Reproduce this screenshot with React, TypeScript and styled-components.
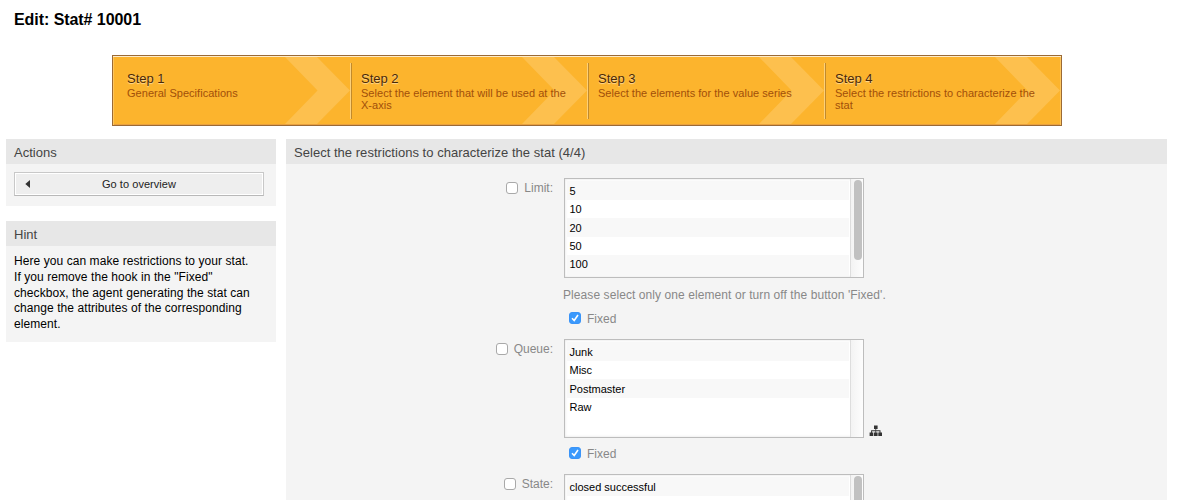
import React from "react";
import styled, { createGlobalStyle } from "styled-components";

const GlobalStyle = createGlobalStyle`
  body {
    margin: 0;
    background: #fff;
    color: #000;
    font-family: Helvetica, "Liberation Sans", Arial, sans-serif;
    font-size: 12px;
    overflow: hidden;
  }
  * { box-sizing: border-box; }
`;

const Page = styled.div`
  width: 1183px;
  height: 500px;
  overflow: hidden;
`;

const Title = styled.h1`
  margin: 0;
  padding: 10px 14px 0;
  height: 55px;
  font-size: 16px;
  line-height: 19px;
  font-weight: bold;
  letter-spacing: -0.06px;
`;

const StepBar = styled.ol`
  display: flex;
  list-style: none;
  margin: 0 0 13px 112px;
  padding: 0;
  width: 950px;
  height: 71px;
  background: #fcb42d;
  border: 1px solid #9b6a35;
  box-shadow: inset 0 1px #fdeccb, inset 1px 0 #fdc65f, inset -1px 0 #fdc65f, inset 0 -1px #e9a040;
`;

const StepItem = styled.li`
  position: relative;
  flex: none;
  width: 237px;
  padding: 15px 0 0 10px;

  &::before {
    content: "";
    position: absolute;
    left: -1px;
    top: 7px;
    width: 2px;
    height: 56px;
    background: linear-gradient(90deg, #fdd079 50%, #c18a2c 50%);
  }
  &:first-child {
    width: 238px;
    padding-left: 14px;
  }
  &:first-child::before { display: none; }
  &:last-child { width: 236px; }
`;

const Chevron = styled.svg`
  position: absolute;
  right: 1px;
  top: 1px;
  fill: #fdc04e;
`;

const StepName = styled.div`
  position: relative;
  font-size: 13px;
  line-height: 16px;
  color: #4a2805;
  text-shadow: 0 1px 1px rgba(255, 255, 255, 0.55);
`;

const StepText = styled.div`
  position: relative;
  width: 215px;
  font-size: 11px;
  line-height: 12px;
  color: #a14f0a;
  letter-spacing: 0.03px;
`;

const Columns = styled.div`
  display: flex;
  gap: 10px;
  padding: 0 16px 0 6px;
`;

const Sidebar = styled.aside`
  display: flex;
  flex-direction: column;
  gap: 15px;
  width: 270px;
`;

const Panel = styled.section`
  background: #f4f4f4;
`;

const MainPanel = styled(Panel)`
  flex: 1;
  height: 361px;
`;

const PanelTitle = styled.h2`
  margin: 0;
  height: 25px;
  padding-left: 8px;
  background: #e7e7e7;
  color: #444;
  font-size: 13px;
  font-weight: normal;
  line-height: 27px;
  letter-spacing: 0.03px;
`;

const PanelBody = styled.div`
  padding: 8px 12px 10px 8px;
`;

const OverviewButton = styled.button`
  display: flex;
  align-items: center;
  width: 250px;
  height: 24px;
  padding: 0 10px;
  border: 1px solid #c8c8c8;
  border-bottom-color: #b8b8b8;
  box-shadow: inset 0 0 0 1px #fff;
  background: #eee;
  color: #222;
  font-family: inherit;
  font-size: 11px;
  letter-spacing: 0.05px;
`;

const ButtonLabel = styled.span`
  flex: 1;
  text-align: center;
  padding-right: 5px;
`;

const HintText = styled.p`
  margin: 0;
  height: 78px;
  line-height: 15.8px;
  white-space: nowrap;
  letter-spacing: 0.07px;
`;

const Form = styled.div`
  padding-top: 14px;
`;

const Field = styled.div<{ $height: number }>`
  display: flex;
  height: ${(p) => p.$height}px;
`;

const FieldLabel = styled.label`
  display: flex;
  justify-content: flex-end;
  gap: 6px;
  width: 267px;
  height: 20px;
  margin-right: 11px;
  line-height: 21px;
  color: #888;
`;

const Check = styled.span<{ $on?: boolean }>`
  display: block;
  flex: none;
  width: 12px;
  height: 12px;
  margin-top: 4px;
  border: 1px solid ${(p) => (p.$on ? "#3a94f8" : "#a9a9a9")};
  border-radius: 3px;
  background: ${(p) => (p.$on ? "#3b99fc" : "#fff")};

  svg { display: block; }
`;

const Control = styled.div`
  display: flex;
  flex-direction: column;
`;

const ListRow = styled.div`
  display: flex;
  align-items: flex-end;
  gap: 5px;
`;

const ListBox = styled.div<{ $height: number }>`
  display: flex;
  width: 300px;
  height: ${(p) => p.$height}px;
  border: 1px solid #bdbdbd;
  background: #fff;
  box-shadow: inset 0 0 3px rgba(0, 0, 0, 0.12);
`;

const Options = styled.ul`
  flex: 1;
  margin: 2px 1px 1px 2px;
  padding: 0;
  list-style: none;
  overflow: hidden;
`;

const Option = styled.li`
  height: 18.33px;
  padding: 0.3px 0 0 2.5px;
  font-size: 11px;
  line-height: 18px;

  &:nth-child(odd) { background: #f8f8f8; }
  &:first-child { height: 19px; padding-top: 0; line-height: 21px; }
  &:nth-child(5) { height: 21px; }
`;

const Track = styled.div`
  width: 13px;
  padding: 1px 1px 0 3px;
  border-left: 1px solid #ddd;
  background: linear-gradient(90deg, #f3f3f3, #fdfdfd);
`;

const Thumb = styled.div`
  width: 8px;
  height: 80px;
  border-radius: 4px;
  background: #c1c1c1;
`;

const Explanation = styled.p`
  margin: 10px 0 1px -1px;
  height: 14px;
  line-height: 15px;
  color: #888;
  white-space: nowrap;
  letter-spacing: 0.08px;
`;

const FixedLabel = styled.label`
  display: flex;
  gap: 6px;
  margin: 5px 0 0 5px;
  height: 20px;
  line-height: 22px;
  color: #888;
`;

const steps = [
  ["Step 1", "General Specifications"],
  ["Step 2", "Select the element that will be used at the X-axis"],
  ["Step 3", "Select the elements for the value series"],
  ["Step 4", "Select the restrictions to characterize the stat"],
];

const Tick = () => (
  <svg width="10" height="10" viewBox="0 0 10 10" fill="none" stroke="#fff" strokeWidth="1.6">
    <path d="M2 5.3 4.2 7.5 8 2" />
  </svg>
);

const TreeIcon = () => (
  <svg width="14" height="13" viewBox="0 0 14 13" fill="#333">
    <path d="M5 .6h3.6v3.3H7.2v1.4h4.3v2.2H13V11H9.3V7.5h1.2V6.2H7.2v1.3h1.4V11H5V7.5h1.4V6.2H3.1v1.3h1.2V11H.6V7.5h1.5V5.3h4.3V3.9H5z" />
  </svg>
);

interface SelectFieldProps {
  label: string;
  options: string[];
  fieldHeight: number;
  boxHeight: number;
  explanation?: string;
  scroll?: boolean;
  tree?: boolean;
}

const SelectField = ({ label, options, fieldHeight, boxHeight, explanation, scroll, tree }: SelectFieldProps) => (
  <Field $height={fieldHeight}>
    <FieldLabel>
      <Check />
      {label}
    </FieldLabel>
    <Control>
      <ListRow>
        <ListBox $height={boxHeight}>
          <Options>
            {options.map((o) => (
              <Option key={o}>{o}</Option>
            ))}
          </Options>
          <Track>{scroll && <Thumb />}</Track>
        </ListBox>
        {tree && <TreeIcon />}
      </ListRow>
      {explanation && <Explanation>{explanation}</Explanation>}
      {fieldHeight > 100 && (
        <FixedLabel>
          <Check $on>
            <Tick />
          </Check>
          Fixed
        </FixedLabel>
      )}
    </Control>
  </Field>
);

export default function App() {
  return (
    <Page>
      <GlobalStyle />
      <Title>Edit: Stat# 10001</Title>
      <StepBar>
        {steps.map(([name, text]) => (
          <StepItem key={name}>
            <Chevron width="65" height="67" viewBox="0 0 65 67">
              <path d="M0 0h32l33 33.5L32 67H0l32.5-33.5z" />
            </Chevron>
            <StepName>{name}</StepName>
            <StepText>{text}</StepText>
          </StepItem>
        ))}
      </StepBar>
      <Columns>
        <Sidebar>
          <Panel>
            <PanelTitle>Actions</PanelTitle>
            <PanelBody>
              <OverviewButton>
                <svg width="5" height="8" viewBox="0 0 5 8" fill="#333">
                  <path d="M5 0v8L.3 4z" />
                </svg>
                <ButtonLabel>Go to overview</ButtonLabel>
              </OverviewButton>
            </PanelBody>
          </Panel>
          <Panel>
            <PanelTitle>Hint</PanelTitle>
            <PanelBody>
              <HintText>
                Here you can make restrictions to your stat.
                <br />
                If you remove the hook in the "Fixed"
                <br />
                checkbox, the agent generating the stat can
                <br />
                change the attributes of the corresponding
                <br />
                element.
              </HintText>
            </PanelBody>
          </Panel>
        </Sidebar>
        <MainPanel>
          <PanelTitle>Select the restrictions to characterize the stat (4/4)</PanelTitle>
          <Form>
            <SelectField
              label="Limit:"
              options={["5", "10", "20", "50", "100"]}
              fieldHeight={161}
              boxHeight={100}
              explanation="Please select only one element or turn off the button 'Fixed'."
              scroll
            />
            <SelectField
              label="Queue:"
              options={["Junk", "Misc", "Postmaster", "Raw"]}
              fieldHeight={135}
              boxHeight={99}
              tree
            />
            <SelectField
              label="State:"
              options={["closed successful"]}
              fieldHeight={26}
              boxHeight={99}
              scroll
            />
          </Form>
        </MainPanel>
      </Columns>
    </Page>
  );
}
